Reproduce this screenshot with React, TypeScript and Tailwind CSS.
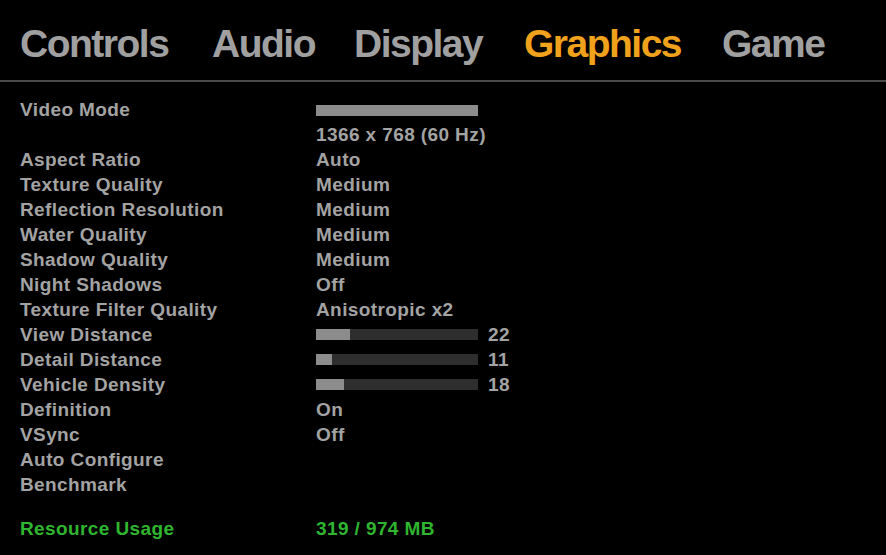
import React from "react";

const rows: [string, string | null, number?][] = [
  ["Aspect Ratio", "Auto"],
  ["Texture Quality", "Medium"],
  ["Reflection Resolution", "Medium"],
  ["Water Quality", "Medium"],
  ["Shadow Quality", "Medium"],
  ["Night Shadows", "Off"],
  ["Texture Filter Quality", "Anisotropic x2"],
  ["View Distance", "22", 34],
  ["Detail Distance", "11", 16],
  ["Vehicle Density", "18", 28],
  ["Definition", "On"],
  ["VSync", "Off"],
  ["Auto Configure", null],
  ["Benchmark", null],
];

export default function App() {
  const tabs = [
    ["Controls", "w-[192px]"],
    ["Audio", "w-[142px]"],
    ["Display", "w-[170px]"],
    ["Graphics", "w-[198px]"],
    ["Game", "w-[120px]"],
  ];
  return (
    <div className="w-[886px] h-[555px] bg-black overflow-hidden text-[#a3a3a3] font-bold" style={{ fontFamily: '"Liberation Sans", Arial, sans-serif' }}>
      <div className="flex pl-[20px] pt-[22px] h-[80px]">
        {tabs.map(([t, w]) => (
          <div key={t} className={`${w} text-[39px] leading-[44px] tracking-[-1.5px] ${t === "Graphics" ? "text-[#f0a21c]" : "text-[#a0a0a0]"}`}>{t}</div>
        ))}
      </div>
      <div className="h-[2px] bg-[#4a4a4a]" />
      <div className="pl-[20px] pt-[15px] text-[19px] leading-[25px] tracking-[0.4px]">
        <div className="flex h-[25px]">
          <div className="w-[296px]">Video Mode</div>
          <div className="pt-[8px]"><div className="w-[162px] h-[11px] bg-[#8c8c8c]" /></div>
        </div>
        <div className="flex h-[25px]">
          <div className="w-[296px]" />
          <div>1366 x 768 (60 Hz)</div>
        </div>
        {rows.map(([l, v, p]) => (
          <div key={l} className="flex h-[25px]">
            <div className="w-[296px]">{l}</div>
            {p !== undefined ? (
              <div className="flex items-center">
                <div className="w-[162px] h-[11px] bg-[#2e2e2e] flex">
                  <div className="h-full bg-[#8c8c8c]" style={{ width: p }} />
                </div>
                <div className="ml-[10px]">{v}</div>
              </div>
            ) : (
              <div>{v}</div>
            )}
          </div>
        ))}
        <div className="flex h-[25px] mt-[19px] text-[#2fb52f]">
          <div className="w-[296px]">Resource Usage</div>
          <div>319 / 974 MB</div>
        </div>
      </div>
    </div>
  );
}
